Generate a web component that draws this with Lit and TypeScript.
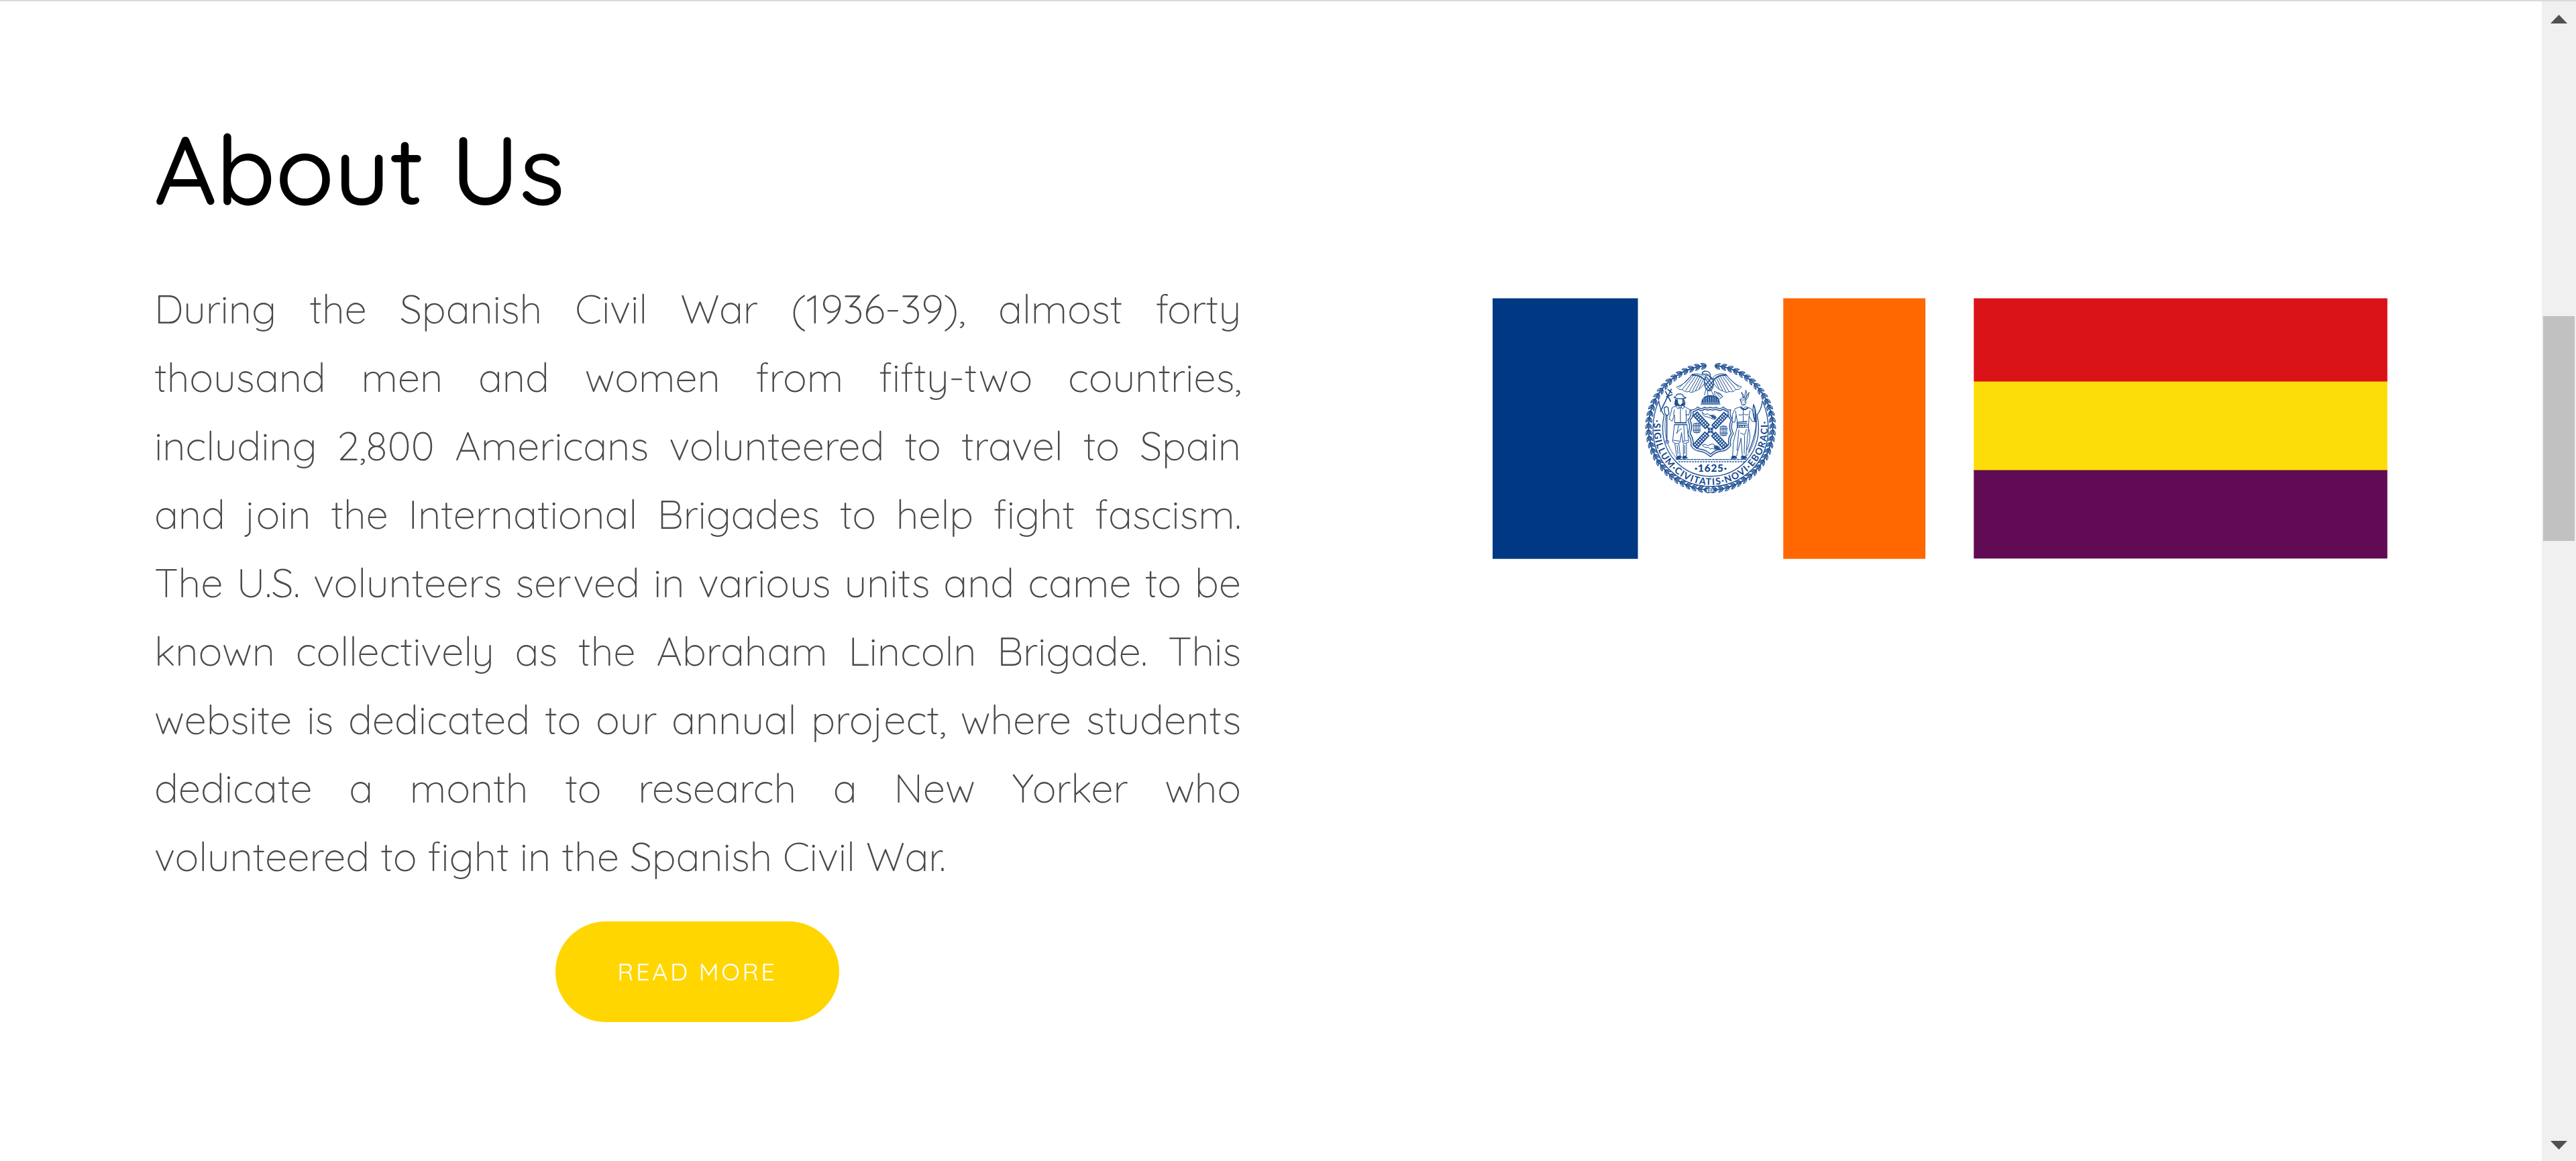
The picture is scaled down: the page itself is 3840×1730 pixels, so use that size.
import { LitElement, html, css, svg } from "lit";
import { customElement } from "lit/decorators.js";

const LINES = [
  "During the Spanish Civil War (1936-39), almost forty",
  "thousand men and women from fifty-two countries,",
  "including 2,800 Americans volunteered to travel to Spain",
  "and join the International Brigades to help fight fascism.",
  "The U.S. volunteers served in various units and came to be",
  "known collectively as the Abraham Lincoln Brigade. This",
  "website is dedicated to our annual project, where students",
  "dedicate a month to research a New Yorker who",
  "volunteered to fight in the Spanish Civil War.",
];

// Laurel ring: leaf clusters spaced along a circle, open at the top.
const leaves = Array.from({ length: 60 }, (_, i) => {
  const a = 7 + (i * 346) / 59;
  const flip = a > 180 ? -1 : 1;
  return svg`<g transform="rotate(${a} 330 322) translate(330 44) scale(${flip} 1)">
    <path d="M-15 -2Q-5 -16 9 -12Q3 -2-15 -2M-15 2Q-4 -5 14 0Q-3 8-15 2M-13 5Q-4 17 9 13Q2 4-13 5" fill="#fff" stroke="#1d4f92" stroke-width="3"/>
    <path d="M-12 -4L5 -9M-14 1L10 1M-10 7L6 10" stroke="#1d4f92" stroke-width="2.5" fill="none"/>
  </g>`;
});

// One lattice sail of the windmill, pointing up from the hub.
const sail = (angle: number) => svg`<g transform="rotate(${angle} 329 334)">
  <path d="M317 233h26v80h-26z" fill="#1d4f92"/>
  ${[0, 1, 2, 3, 4, 5, 6].map((r) => svg`<path d="M321 ${238 + r * 10.7}h7v6h-7zM332 ${238 + r * 10.7}h7v6h-7z" fill="#fff" stroke="none"/>`)}
  <path d="M329 310v24" stroke="#1d4f92" stroke-width="6"/>
</g>`;

const seal = svg`
<svg x="215" y="86" width="220" height="220" viewBox="0 0 660 660" fill="none" stroke="#1d4f92" stroke-width="3" stroke-linecap="round" stroke-linejoin="round">
  ${leaves}
  <path d="M98 202C55 305 62 430 147 511C248 609 412 609 513 511C598 430 605 305 562 202" stroke-width="4"/>
  <path d="M98 202C102 232 112 252 122 266C106 340 119 416 172 471C258 562 402 562 488 471C541 416 554 340 538 266C548 252 558 232 562 202" stroke-width="4"/>
  <path d="M130 266C118 335 130 405 178 459M530 266C542 335 530 405 482 459" stroke-width="2.5"/>
  <path id="motto" d="M78.500 281A255 255 0 1 0 581.500 281" stroke="none"/>
  <g class="seal-text" fill="#12468c" stroke="none">
    <text font-size="42" textLength="870"><textPath href="#motto" startOffset="4" textLength="870">·SIGILLUM·CIVITATIS·NOVI·EBORACI·</textPath></text>
    <text class="year" x="330" y="518" font-size="46" text-anchor="middle" textLength="144">·1625·</text>
  </g>
  <g>
    <path d="M304 96C290 80 262 78 246 84C232 108 207 132 178 139C184 150 192 152 204 152C212 160 222 164 232 160C242 166 252 164 260 158C276 156 292 140 302 124Z" fill="#fff"/>
    <path d="M342 96C354 80 384 78 400 84C414 108 440 130 468 139C462 150 454 152 442 152C434 160 424 164 414 160C404 166 394 164 386 158C370 156 354 140 344 124Z" fill="#fff"/>
    <path d="M252 90L204 150M262 92L218 156M272 94L234 160M281 97L248 160M289 102L262 157M296 110L278 148M250 84L190 142M394 90L442 150M384 92L428 156M374 94L412 160M365 97L398 160M357 102L384 157M350 110L368 148M396 84L456 142"/>
    <path d="M250 87Q282 84 302 108M396 87Q364 84 344 108" stroke-width="6"/>
    <path d="M292 78Q298 66 314 70Q330 74 329 94Q346 106 342 134Q338 154 324 158Q304 150 302 124Q301 104 310 90Q302 80 292 82Z" fill="#fff" stroke-width="4"/>
    <path d="M309 80L316 88M306 102L336 145M312 96L341 132M305 120L330 154M332 100L306 134M340 114L312 148M341 130L322 154M318 84L334 106" stroke-width="4"/>
    <path d="M310 148L302 176M316 156L318 178M332 154L344 178M348 160L374 170L384 183L370 194L350 176ZM356 166L376 188M362 166L384 182"/>
    <path d="M290 209Q292 178 329 178Q366 178 370 209Z" fill="#1d4f92"/>
    <path d="M300 190V208M310 186V208M320 184V208M330 184V208M340 184V208M350 187V208M360 194V208" stroke="#fff" stroke-width="2"/>
    <path d="M287 216H372" stroke-width="4"/>
  </g>
  <g>
    <path d="M328 230Q340 238 355 230Q372 244 386 229Q404 246 420 242Q410 268 432 288Q415 316 432 350Q414 370 420 400Q404 424 384 426Q352 428 330 452Q304 428 276 426Q256 424 242 402Q246 372 228 350Q244 316 228 288Q248 266 240 242Q256 246 272 229Q288 244 302 230Q316 238 328 230Z" fill="#fff" stroke-width="4"/>
    <path d="M328 240Q342 246 354 239Q372 252 386 239Q398 249 409 250Q404 270 422 288Q408 316 422 348Q406 368 411 396Q398 414 382 417Q350 420 330 440Q304 418 278 417Q264 414 252 398Q254 370 238 348Q252 316 238 288Q256 268 251 251Q262 249 274 239Q288 252 303 239Q316 246 328 240Z" stroke-width="4.500"/>
    ${[43, 137, 223, 317].map(sail)}
    <circle cx="329" cy="334" r="11" fill="#1d4f92"/>
    <path d="M329 316V352M311 334H347" stroke="#fff" stroke-width="2"/>
    <path d="M254 304Q268 298 282 304V342Q268 348 254 342ZM261 302V345M268 301V346M275 302V345M252 313H285M252 333H285M374 317Q388 311 402 317V355Q388 361 374 355ZM381 315V358M388 314V359M395 315V358M372 327H405M372 346H405" stroke-width="3"/>
    <path d="M292 252L304 263L318 260L328 269L344 264L356 276L348 285L332 280L318 274L306 272L298 266ZM294 400L306 396L316 402L338 394L352 402L368 406L375 422L352 420L338 414L328 418L320 410L306 410Z" fill="#fff"/>
    <path d="M330 266L350 272L352 281L338 277ZM346 404L364 408L371 420L350 416Z" fill="#1d4f92"/>
  </g>
  <g>
    <path d="M106 248L154 150M128 160L151 204M139 151L157 166M133 184L158 174" stroke-width="5"/>
    <path d="M134 238V382" stroke-width="5"/>
    <circle cx="136" cy="385" r="7"/>
    <path d="M122 234Q132 222 140 234L144 260Q136 274 126 260Z" fill="#fff" stroke-width="4"/>
    <path d="M166 187Q178 180 180 173Q196 168 206 176L208 183L220 188Q204 198 166 187ZM174 194L170 218Q178 228 188 222M208 194Q218 208 214 220L203 224M182 196Q180 216 194 222Q206 216 206 196" fill="#fff" stroke-width="4"/>
    <path d="M174 196L181 198L182 214L192 224L204 214L206 198L213 220L200 228L178 224L171 214Z" fill="#1d4f92"/>
    <path d="M184 197H204V211L194 221L185 211Z" fill="#fff" stroke="none"/>
    <path d="M182 222L158 232L152 256L144 284L158 292L168 264L170 300H220L222 262L232 266L238 242L204 222L194 236ZM195 237V298M168 242L164 264M220 242L220 270M174 224L184 238L194 228L206 238L214 226" fill="#fff"/>
    <path d="M170 300H222M168 308H224" stroke-width="4"/>
    <path d="M168 310L160 384Q176 400 193 388L200 344L206 390Q220 396 232 386L224 310ZM187 312L180 346M176 346L200 326M210 312L214 378M164 378L190 382M206 382L228 380M170 394L176 434L181 456L194 448L188 394M208 396V452L222 450L222 394M180 400L184 438M214 400V438" fill="#fff"/>
    <path d="M180 451Q190 444 200 452L192 462L177 460ZM206 451Q218 442 226 458L206 460Z" fill="#1d4f92"/>
  </g>
  <g>
    <path d="M462 196L470 220Q480 228 488 212L486 192Q473 182 462 196ZM476 189L468 163Q480 174 480 188M482 188L487 154Q496 168 488 188M486 192L502 164Q502 184 489 198" fill="#fff"/>
    <path d="M463 198H487M468 207H472M480 207H484M474 217H482"/>
    <path d="M468 228L440 236L428 262L426 294L438 298L444 266L452 304L448 330H498L502 270L516 294L528 294L520 250L510 236L486 228L478 236ZM456 264Q466 270 474 262M480 262Q492 268 498 262M476 240V296M442 248L444 266M506 246L502 270" fill="#fff"/>
    <path d="M466 233Q478 248 496 234" stroke-width="6"/>
    <path d="M447 298L492 294M447 305L492 302M448 312L496 310M450 316L456 334M460 314V330M470 314L472 332M482 314V332" stroke-width="4"/>
    <path d="M448 322L432 386L428 450H446L466 368L472 450H488L494 372L500 320ZM456 332L448 424M464 346L482 354L490 330M482 358L480 438M498 320Q516 360 494 420" fill="#fff"/>
    <path d="M426 450Q440 444 448 458L424 460ZM468 450Q484 444 492 458L470 462Z" fill="#1d4f92"/>
    <path d="M522 218Q540 260 532 322Q526 370 500 430M522 218Q514 260 530 296M527 228L530 294" stroke-width="4"/>
  </g>
  <path d="M176 464H487" stroke-width="4" stroke-dasharray="11 5"/>
  <path d="M188 474H484" stroke-width="4" stroke-dasharray="5 7"/>
  <path d="M312 595H344V611H312ZM320 607V599L328 605L336 599V607" fill="#fff"/>
</svg>`;

@customElement("app-root")
export class AppRoot extends LitElement {
  static styles = css`
    :host { display: block; }
    .page {
      display: flex; box-sizing: border-box; width: 3840px; height: 1730px; overflow: hidden;
      background: #fff; border-top: 2px solid #dadae0;
      font-family: Quicksand, Lato, "Open Sans", sans-serif;
      text-rendering: geometricPrecision;
    }
    .section { display: flex; flex: 1; align-items: flex-start; }
    .about { width: 1620px; padding-left: 230px; display: flex; flex-direction: column; }
    h2 { margin: 0; padding-top: 159px; font-size: 144px; line-height: 180px; font-weight: 500; color: #000; letter-spacing: -.3px; white-space: nowrap; }
    .copy { margin-top: 68px; font-size: 60px; line-height: 102px; font-weight: 300; color: #4a4a4a; letter-spacing: -.155px; }
    .line { text-align: justify; text-align-last: justify; height: 102px; }
    .line:last-child { text-align-last: left; }
    .button {
      align-self: center; margin: 46px 1px 0 0; width: 423px; height: 150px; border: 0; border-radius: 75px; padding: 0;
      background: #ffd600; color: #fff; font-family: inherit; font-size: 36px; line-height: 150px; letter-spacing: 3.6px; text-align: center;
    }
    .flags { display: flex; gap: 71px; padding: 442px 0 0 375px; }
    .flag { display: block; }
    .seal-text { font-family: Lato, sans-serif; font-weight: 700; }
    .year { font-weight: 900; }
    .scrollbar { width: 51px; height: 100%; background: #f0f0f0; display: flex; flex-direction: column; align-items: center; }
    .arrow { display: block; width: 25px; height: 13px; margin-top: 20px; }
    .thumb { width: 47px; height: 335px; margin-top: 436px; background: #c1c1c1; }
    .down { margin-top: auto; margin-bottom: 17px; }
  `;

  render() {
    return html`<div class="page">
      <main class="section">
        <section class="about">
          <h2>About Us</h2>
          <div class="copy">${LINES.map((text) => html`<div class="line">${text}</div>`)}</div>
          <button class="button">READ MORE</button>
        </section>
        <div class="flags">
          <svg class="flag" width="646" height="390" viewBox="0 0 646 390">
            <path d="M0 .4H216.600V388.700H0Z" fill="#003884"/>
            <path d="M433.300 .4H645.200V388.700H433.300Z" fill="#ff6700"/>
            ${seal}
          </svg>
          <svg class="flag" width="617" height="390" viewBox="0 0 617 390">
            <path d="M.3 .4H616.800V125H.3Z" fill="#da1318"/>
            <path d="M.3 124.500H616.800V257H.3Z" fill="#fcdd09"/>
            <path d="M.3 256.400H616.800V388.300H.3Z" fill="#610b55"/>
          </svg>
        </div>
      </main>
      <aside class="scrollbar">
        <svg class="arrow" viewBox="0 0 25 13"><path d="M12.500 0L25 13H0Z" fill="#505050"/></svg>
        <div class="thumb"></div>
        <svg class="arrow down" viewBox="0 0 25 13"><path d="M0 0H25L12.500 13Z" fill="#505050"/></svg>
      </aside>
    </div>`;
  }
}
